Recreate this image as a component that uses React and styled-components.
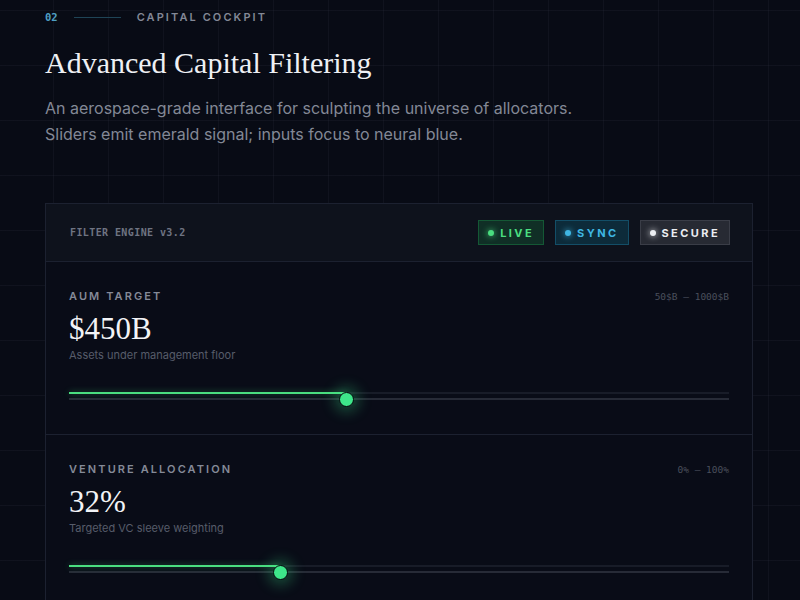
import React from "react"
import styled, { createGlobalStyle } from "styled-components"

const GlobalStyle = createGlobalStyle`
  html, body {
    margin: 0;
    padding: 0;
    background: #080b15;
  }
  body {
    font-family: "Inter", "Noto Sans", sans-serif;
    -webkit-font-smoothing: antialiased;
  }
`

const Page = styled.div`
  min-height: 600px;
  box-sizing: border-box;
  padding: 10px 47px 0 45px;
  background-color: #080b15;
  background-image:
    linear-gradient(to right, rgba(148, 163, 184, 0.055) 1px, transparent 1px),
    linear-gradient(to bottom, rgba(148, 163, 184, 0.055) 1px, transparent 1px);
  background-size: 55px 55px;
  background-position: -2px 10px;
  overflow: hidden;
`

const Eyebrow = styled.div`
  display: flex;
  align-items: center;
  gap: 16px;
  height: 14px;
`

const EyebrowIndex = styled.span`
  font-family: "DejaVu Sans Mono", "Liberation Mono", monospace;
  font-size: 10.5px;
  font-weight: 700;
  color: #4f9fc4;
`

const EyebrowRule = styled.span`
  width: 47px;
  height: 1px;
  background: #1f4456;
`

const EyebrowLabel = styled.span`
  font-size: 11px;
  font-weight: 600;
  letter-spacing: 0.19em;
  color: #838896;
`

const Title = styled.h1`
  margin: 21px 0 0;
  font-family: "Liberation Serif", serif;
  font-weight: 400;
  font-size: 30px;
  line-height: 36px;
  color: #eef0f4;
`

const Lead = styled.p`
  margin: 14px 0 0;
  font-size: 16px;
  line-height: 26px;
  color: #838896;
`

const Card = styled.section`
  margin-top: 56px;
  width: 708px;
  box-sizing: border-box;
  border: 1px solid #1c2130;
  background: #090c17;
`

const CardHeader = styled.header`
  display: flex;
  align-items: center;
  justify-content: space-between;
  height: 57px;
  padding: 0 22px 0 24px;
  background: #0e121c;
  border-bottom: 1px solid #1c2130;
`

const EngineName = styled.span`
  font-family: "DejaVu Sans Mono", "Liberation Mono", monospace;
  font-size: 10px;
  letter-spacing: 0.4px;
  font-weight: 700;
  color: #6f7482;
`

const Badges = styled.div`
  display: flex;
  gap: 11px;
`

const tones = {
  green: { bg: "rgba(34, 197, 94, 0.16)", border: "rgba(34, 197, 94, 0.28)", fg: "#4ade80" },
  cyan: { bg: "rgba(14, 130, 170, 0.22)", border: "rgba(34, 160, 210, 0.3)", fg: "#3fb6e3" },
  gray: { bg: "#272a33", border: "#3a3d47", fg: "#eceef2" },
}

const Badge = styled.span`
  display: flex;
  align-items: center;
  gap: 6px;
  height: 25px;
  box-sizing: border-box;
  padding: 0 9px 0 9px;
  background: ${p => tones[p.tone].bg};
  border: 1px solid ${p => tones[p.tone].border};
  color: ${p => tones[p.tone].fg};
  font-size: 11px;
  font-weight: 700;
  letter-spacing: 0.22em;
`

const Dot = styled.span`
  width: 6px;
  height: 6px;
  border-radius: 50%;
  background: ${p => tones[p.tone].fg};
  box-shadow: 0 0 6px ${p => tones[p.tone].fg};
`

const Row = styled.div`
  padding: 27px 23px 29px 23px;
  border-bottom: 1px solid #1c2130;
  &:last-child {
    border-bottom: none;
  }
`

const RowTop = styled.div`
  display: flex;
  justify-content: space-between;
  align-items: center;
  height: 14px;
`

const Label = styled.span`
  font-size: 11px;
  font-weight: 600;
  letter-spacing: 0.19em;
  color: #858a98;
`

const Range = styled.span`
  font-family: "DejaVu Sans Mono", "Liberation Mono", monospace;
  font-size: 9.5px;
  color: #4a4f5c;
`

const Value = styled.div`
  margin-top: 9px;
  font-family: "Liberation Serif", serif;
  font-size: 31px;
  line-height: 33px;
  color: #f2f3f6;
`

const Hint = styled.div`
  margin-top: 3px;
  font-size: 11px;
  line-height: 14px;
  color: #575c6a;
`

const Slider = styled.div`
  position: relative;
  margin-top: 23px;
  height: 20px;
`

const TopTrack = styled.div`
  position: absolute;
  left: 0;
  right: 0;
  top: 7px;
  height: 2px;
  background: #181c28;
`

const BaseTrack = styled.div`
  position: absolute;
  left: 0;
  right: 0;
  top: 13px;
  height: 2px;
  background: #272b37;
`

const Fill = styled.div`
  position: absolute;
  left: 0;
  top: 7px;
  height: 2px;
  background: #4ade80;
  box-shadow: 0 0 6px rgba(74, 222, 128, 0.45);
`

const Thumb = styled.div`
  position: absolute;
  top: 14px;
  width: 15px;
  height: 15px;
  box-sizing: border-box;
  margin: -7.5px 0 0 -7.5px;
  border-radius: 50%;
  background: #3ee68a;
  border: 1.5px solid #04060b;
  box-shadow: 0 0 14px 5px rgba(62, 230, 138, 0.3);
`

const filters = [
  {
    label: "AUM TARGET",
    range: "50$B — 1000$B",
    value: "$450B",
    hint: "Assets under management floor",
    pct: (450 - 50) / 950,
  },
  {
    label: "VENTURE ALLOCATION",
    range: "0% — 100%",
    value: "32%",
    hint: "Targeted VC sleeve weighting",
    pct: 0.32,
  },
]

const FilterRow = ({ label, range, value, hint, pct }) => (
  <Row>
    <RowTop>
      <Label>{label}</Label>
      <Range>{range}</Range>
    </RowTop>
    <Value>{value}</Value>
    <Hint>{hint}</Hint>
    <Slider>
      <TopTrack />
      <BaseTrack />
      <Fill style={{ width: `${pct * 100}%` }} />
      <Thumb style={{ left: `${pct * 100}%` }} />
    </Slider>
  </Row>
)

export default function App() {
  return (
    <>
      <GlobalStyle />
      <Page>
        <Eyebrow>
          <EyebrowIndex>02</EyebrowIndex>
          <EyebrowRule />
          <EyebrowLabel>CAPITAL COCKPIT</EyebrowLabel>
        </Eyebrow>
        <Title>Advanced Capital Filtering</Title>
        <Lead>
          An aerospace-grade interface for sculpting the universe of allocators.
          <br />
          Sliders emit emerald signal; inputs focus to neural blue.
        </Lead>
        <Card>
          <CardHeader>
            <EngineName>FILTER ENGINE v3.2</EngineName>
            <Badges>
              <Badge tone="green"><Dot tone="green" />LIVE</Badge>
              <Badge tone="cyan"><Dot tone="cyan" />SYNC</Badge>
              <Badge tone="gray"><Dot tone="gray" />SECURE</Badge>
            </Badges>
          </CardHeader>
          {filters.map(f => (
            <FilterRow key={f.label} {...f} />
          ))}
        </Card>
      </Page>
    </>
  )
}
